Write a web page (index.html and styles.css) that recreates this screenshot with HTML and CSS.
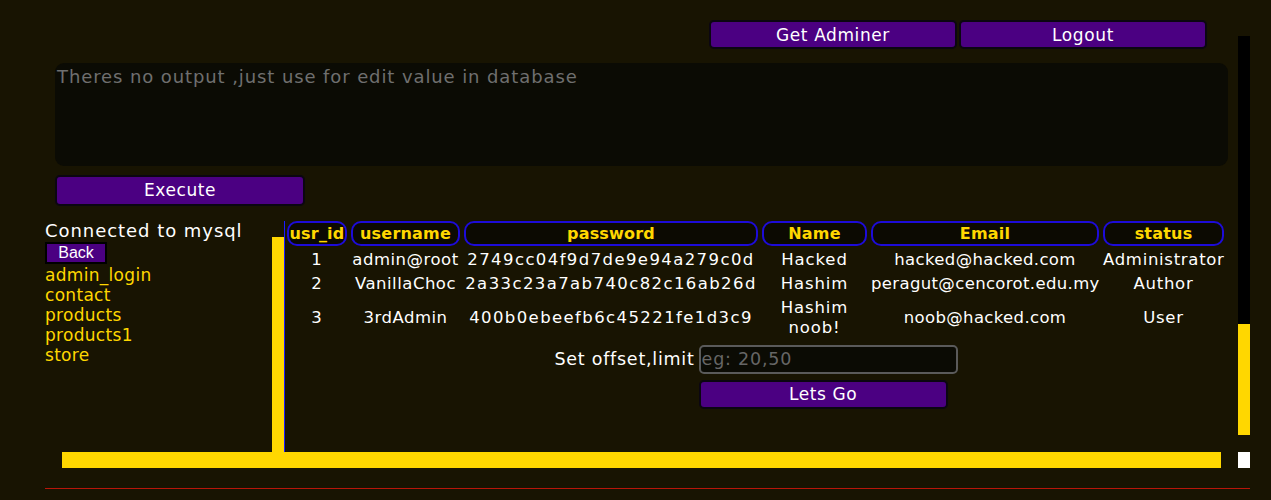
FILE: index.html
```html
<!DOCTYPE html>
<html>
<head>
<meta charset="utf-8">
<link rel="stylesheet" href="styles.css">
</head>
<body>
<div class="page">
  <div class="frame">
    <div class="main">
      <div class="topbar">
        <button class="btn btn-top">Get Adminer</button>
        <button class="btn btn-top">Logout</button>
      </div>
      <textarea class="query" placeholder="Theres no output ,just use for edit value in database"></textarea>
      <button class="btn btn-exec">Execute</button>
      <div class="content">
        <div class="sidebar">
          <div class="connected">Connected to mysql</div>
          <button class="back">Back</button>
          <ul class="tables">
            <li><a href="#">admin_login</a></li>
            <li><a href="#">contact</a></li>
            <li><a href="#">products</a></li>
            <li><a href="#">products1</a></li>
            <li><a href="#">store</a></li>
          </ul>
        </div>
        <div class="side-scroll"></div>
        <div class="result">
          <table class="data">
            <thead>
              <tr>
                <th class="c-id">usr_id</th>
                <th class="c-user">username</th>
                <th class="c-pass">password</th>
                <th class="c-name">Name</th>
                <th class="c-mail">Email</th>
                <th class="c-status">status</th>
              </tr>
            </thead>
            <tbody>
              <tr><td>1</td><td class="t-user">admin@root</td><td class="t-pass">2749cc04f9d7de9e94a279c0d</td><td>Hacked</td><td class="t-mail">hacked@hacked.com</td><td class="t-status">Administrator</td></tr>
              <tr><td>2</td><td class="t-user">VanillaChoc</td><td class="t-pass">2a33c23a7ab740c82c16ab26d</td><td>Hashim</td><td class="t-mail">peragut@cencorot.edu.my</td><td class="t-status">Author</td></tr>
              <tr><td>3</td><td class="t-user">3rdAdmin</td><td class="t-pass">400b0ebeefb6c45221fe1d3c9</td><td class="wrap">Hashim noob!</td><td class="t-mail">noob@hacked.com</td><td class="t-status">User</td></tr>
            </tbody>
          </table>
          <form class="pager">
            <label class="pager-label">Set offset,limit</label>
            <input class="pager-input" type="text" placeholder="eg: 20,50">
            <span></span>
            <button type="button" class="btn btn-go">Lets Go</button>
          </form>
        </div>
      </div>
    </div>
    <div class="vscroll"><div class="vthumb"></div></div>
    <div class="hscroll"><div class="hthumb"></div></div>
    <div class="corner"></div>
  </div>
  <hr class="rule">
</div>
</body>
</html>
```

FILE: styles.css
```css
html, body {
  margin: 0;
  padding: 0;
  background: #181402;
}

body {
  font-family: "DejaVu Sans", "Liberation Sans", sans-serif;
  color: #ffffff;
  font-size: 18px;
  letter-spacing: 0.9px;
}

.page {
  padding: 20px 21px 0 45px;
}

.frame {
  display: grid;
  grid-template-columns: 1193px 12px;
  grid-template-rows: 432px 16px;
}

.main {
  display: flex;
  flex-direction: column;
  align-items: flex-start;
  min-width: 0;
}

.topbar {
  display: flex;
  justify-content: flex-end;
  gap: 2px;
  width: 1162px;
}

.btn {
  font-family: inherit;
  letter-spacing: 0.6px;
  color: #ffffff;
  background: #4b0082;
  border: 2px solid #0b0612;
  border-radius: 5px;
  font-size: 17px;
  padding: 0;
  cursor: pointer;
  box-sizing: border-box;
}

.btn-top {
  width: 248px;
  height: 29px;
}

.query {
  margin: 14px 0 0 10px;
  width: 1173px;
  height: 103px;
  box-sizing: border-box;
  background: #0b0b04;
  border: none;
  border-radius: 9px;
  padding: 3px 2px;
  font-family: inherit;
  font-size: 18px;
  letter-spacing: 0.9px;
  color: #dddddd;
  resize: none;
  outline: none;
}

.query::placeholder {
  color: #6f6f6f;
}

.btn-exec {
  margin: 9px 0 0 10px;
  width: 250px;
  height: 31px;
}

.content {
  margin-top: 10px;
  display: flex;
  width: 100%;
  height: 237px;
}

.sidebar {
  width: 227px;
  padding-top: 5px;
  line-height: 20px;
}

.connected {
  font-size: 18px;
  letter-spacing: 0.95px;
}

.back {
  margin-top: 1px;
  font-family: "Liberation Sans", Arial, sans-serif;
  letter-spacing: 0;
  font-size: 16px;
  color: #ffffff;
  background: #4b0082;
  border: 2px solid #000000;
  border-radius: 0;
  width: 62px;
  height: 22px;
  padding: 0;
  line-height: 18px;
}

.tables {
  list-style: none;
  margin: 1px 0 0 0;
  padding: 0;
}

.tables li {
  height: 20px;
}

.tables a {
  color: #ffd700;
  text-decoration: none;
  font-size: 17px;
  letter-spacing: 0.3px;
}

.side-scroll {
  margin-top: 21px;
  width: 12px;
  background: #ffd700;
}

.result {
  margin-top: 5px;
  border-left: 1px solid #1a1aff;
  flex: 1;
  display: flex;
  flex-direction: column;
  align-items: center;
  min-width: 0;
}

.data {
  border-collapse: separate;
  border-spacing: 4px;
  margin: -4px 0 0 -2px;
  align-self: flex-start;
  font-size: 16.5px;
  letter-spacing: 0.9px;
  table-layout: fixed;
  width: 945px;
}

.data th {
  color: #ffd700;
  font-weight: bold;
  font-size: 16px;
  letter-spacing: 0.2px;
  border: 2px solid #1d0bd8;
  border-radius: 10px;
  background: #0c0a02;
  height: 21px;
  padding: 0;
  line-height: 21px;
  white-space: nowrap;
}

.data td {
  text-align: center;
  padding: 0;
  line-height: 20px;
  white-space: nowrap;
}

.data td.wrap {
  white-space: normal;
}

.data td.t-user {
  letter-spacing: 0.5px;
}

.data td.t-pass {
  letter-spacing: 1.4px;
}

.data td.t-mail {
  letter-spacing: 0.35px;
}

.data td.t-status {
  letter-spacing: 0.7px;
}

.c-id { width: 56px; }
.c-user { width: 105px; }
.c-pass { width: 290px; }
.c-name { width: 101px; }
.c-mail { width: 224px; }
.c-status { width: 117px; }

.pager {
  display: grid;
  grid-template-columns: auto 259px;
  column-gap: 4px;
  row-gap: 6px;
  align-items: center;
  margin: 3px 11px 0 0;
}

.pager-label {
  font-size: 17.5px;
  letter-spacing: 0.75px;
}

.pager-input {
  box-sizing: border-box;
  width: 259px;
  height: 29px;
  background: #0b0b04;
  border: 2px solid #5a5a5a;
  border-radius: 5px;
  color: #dddddd;
  font-family: inherit;
  font-size: 17.5px;
  letter-spacing: 0.8px;
  padding: 0 1px;
  outline: none;
}

.pager-input::placeholder {
  color: #666666;
}

.btn-go {
  width: 249px;
  height: 29px;
}

.vscroll {
  margin-top: 16px;
  margin-bottom: 17px;
  background: #000000;
  display: flex;
  flex-direction: column;
  justify-content: flex-end;
}

.vthumb {
  height: 111px;
  background: #ffd700;
}

.hscroll {
  padding-left: 17px;
}

.hthumb {
  width: 1159px;
  height: 16px;
  background: #ffd700;
}

.corner {
  background: #ffffff;
}

.rule {
  margin: 20px 0 0 0;
  width: 1205px;
  border: none;
  border-top: 1px solid #b8160a;
  height: 0;
}
```
